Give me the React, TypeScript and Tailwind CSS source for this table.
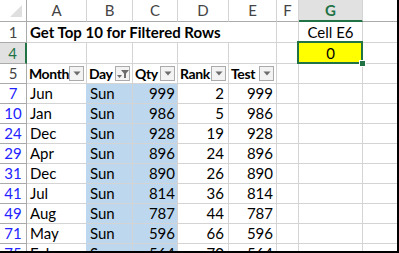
import React from "react";

const grid = "grid grid-cols-[27px_60px_46px_45px_51px_48px_22px_64px_1fr]";
const cell = "border-r border-b border-[#d4d4d4] flex items-center overflow-visible whitespace-nowrap";
const hdr = "border-r border-b border-[#ababab] flex items-center justify-center text-[#444]";

const rows: [number, string, string, number, number, number][] = [
  [7, "Jun", "Sun", 999, 2, 999],
  [10, "Jan", "Sun", 986, 5, 986],
  [24, "Dec", "Sun", 928, 19, 928],
  [29, "Apr", "Sun", 896, 24, 896],
  [31, "Dec", "Sun", 890, 26, 890],
  [41, "Jul", "Sun", 814, 36, 814],
  [49, "Aug", "Sun", 787, 44, 787],
  [71, "May", "Sun", 596, 66, 596],
  [75, "Feb", "Sun", 564, 70, 564],
];

function DropBtn({ filtered }: { filtered?: boolean }) {
  return (
    <div className="absolute right-[2px] top-[2px] w-[15px] h-[15px] border border-[#ababab] bg-[#f3f3f3] flex items-center justify-center">
      {filtered ? (
        <svg width="12" height="10" viewBox="0 0 12 10">
          <path d="M0 6h5l-2.5 3z" fill="#6d6d6d" />
          <path d="M4 1h8L9 4.5V9H7V4.5z" fill="#6d6d6d" />
        </svg>
      ) : (
        <svg width="8" height="5" viewBox="0 0 8 5">
          <path d="M0.5 0.5h7L4 4.5z" fill="#6d6d6d" />
        </svg>
      )}
    </div>
  );
}

export default function App() {
  return (
    <div className="w-[399px] h-[253px] bg-white border-r-2 border-b-2 border-black overflow-hidden text-[15px] text-black font-['Lato','Liberation_Sans',sans-serif] leading-none">
      {/* column headers */}
      <div className={`${grid} h-[22px]`}>
        <div className={`${hdr} relative`}>
          <div className="absolute right-[4px] bottom-[4px] w-0 h-0 border-l-[12px] border-l-transparent border-b-[12px] border-b-[#dfdfdf]" />
        </div>
        {["A", "B", "C", "D", "E", "F"].map((c) => (
          <div key={c} className={`${hdr} border-r-[#d4d4d4]`}>{c}</div>
        ))}
        <div className="border-r border-[#d4d4d4] border-b-2 border-b-[#217346] bg-[#e1e1e1] flex items-center justify-center text-[#217346] font-bold">
          G
        </div>
        <div className={`${hdr} border-r-0`} />
      </div>

      {/* row 1 */}
      <div className={`${grid} h-[21px]`}>
        <div className={`${hdr} text-[#444]`}>1</div>
        <div className={`${cell} border-r-0 pl-[3px] font-bold relative z-10`}>Get Top 10 for Filtered Rows</div>
        <div className={`${cell} border-r-0`} />
        <div className={`${cell} border-r-0`} />
        <div className={`${cell} border-r-0`} />
        <div className={cell} />
        <div className={cell} />
        <div className={`${cell} justify-center`}>Cell E6</div>
        <div className={`${cell} border-r-0`} />
      </div>

      {/* row 4 */}
      <div className={`${grid} h-[21px]`}>
        <div className="border-b border-[#ababab] border-r-2 border-r-[#217346] bg-[#e1e1e1] flex items-center justify-center text-[#217346]">
          4
        </div>
        {[0, 1, 2, 3, 4, 5].map((i) => (
          <div key={i} className={cell} />
        ))}
        <div className={`${cell} relative justify-center bg-[#ffff00]`}>
          0
          <div className="absolute -left-[2px] -top-[2px] -right-[1px] -bottom-[1px] border-2 border-[#217346]" />
          <div className="absolute -right-[4px] -bottom-[4px] w-[7px] h-[7px] bg-[#217346] border border-white" />
        </div>
        <div className={`${cell} border-r-0`} />
      </div>

      {/* row 5 – filter headers */}
      <div className={`${grid} h-[20px] font-bold`}>
        <div className={`${hdr} font-normal`}>5</div>
        {[
          ["Month", false],
          ["Day", true],
          ["Qty", false],
          ["Rank", false],
          ["Test", false],
        ].map(([t, f]) => (
          <div key={t as string} className={`${cell} relative pl-[2px] overflow-hidden text-[14px] tracking-[-0.4px]`}>
            {t as string}
            <DropBtn filtered={f as boolean} />
          </div>
        ))}
        <div className={cell} />
        <div className={cell} />
        <div className={`${cell} border-r-0`} />
      </div>

      {/* data rows */}
      {rows.map(([n, m, d, q, r, t]) => (
        <div key={n} className={`${grid} h-[20px]`}>
          <div className={`${hdr} text-[#2323ff]`}>{n}</div>
          <div className={`${cell} pl-[3px] border-r-[#bdd7ee]`}>{m}</div>
          <div className={`${cell} pl-[3px] bg-[#bdd7ee] border-[#bdd7ee]`}>{d}</div>
          <div className={`${cell} justify-end pr-[2px] bg-[#bdd7ee] border-[#bdd7ee]`}>{q}</div>
          <div className={`${cell} justify-end pr-[4px]`}>{r}</div>
          <div className={`${cell} justify-end pr-[3px]`}>{t}</div>
          <div className={cell} />
          <div className={cell} />
          <div className={`${cell} border-r-0`} />
        </div>
      ))}
    </div>
  );
}
